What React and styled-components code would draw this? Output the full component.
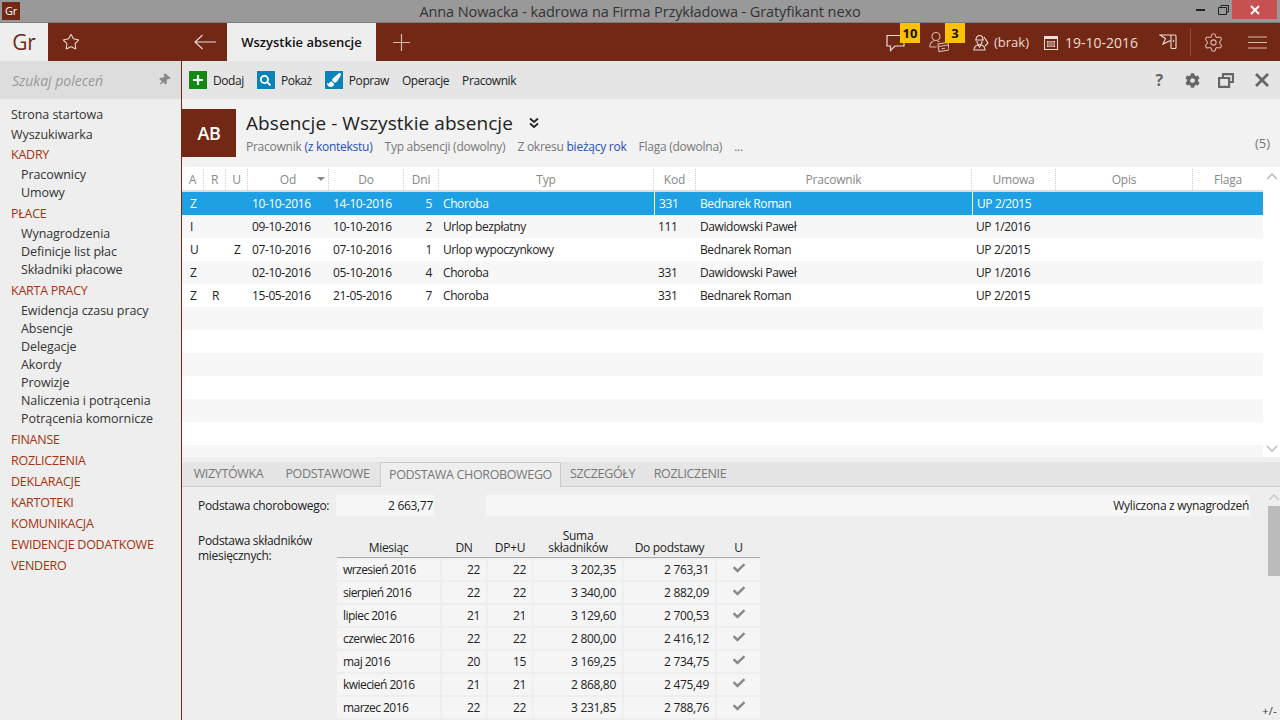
import React from 'react'
import styled, { createGlobalStyle } from 'styled-components'
import { Settings, Star } from 'lucide-react'
import { FaCheck, FaCog, FaPaintBrush, FaSearch, FaThumbtack } from 'react-icons/fa'

const FONT = '"Open Sans", "Noto Sans", "Liberation Sans", sans-serif'

const GlobalStyle = createGlobalStyle`
  html, body {
    margin: 0;
    padding: 0;
    background: #eee;
  }
  * {
    box-sizing: border-box;
  }
`

const Page = styled.div`
  width: 1280px;
  height: 720px;
  overflow: hidden;
  display: flex;
  flex-direction: column;
  font-family: ${FONT};
  font-size: 12px;
  letter-spacing: -0.3px;
  color: #222;
`

const TitleBar = styled.div`
  height: 23px;
  flex: none;
  display: flex;
  align-items: flex-start;
  background: #999;
  border-bottom: 1px solid #7d7d7d;
`

const AppIcon = styled.div`
  width: 18px;
  height: 18px;
  margin: 2px 0 0 2px;
  background: #722814;
  color: #fff;
  font-size: 11px;
  line-height: 18px;
  text-align: center;
`

const WindowTitle = styled.div`
  flex: 1;
  padding-left: 73px;
  text-align: center;
  font-size: 14.5px;
  line-height: 23px;
  letter-spacing: -0.1px;
  color: #333;
`

const WinButton = styled.div`
  width: ${p => p.$w}px;
  height: 19px;
  display: flex;
  align-items: center;
  justify-content: center;
  background: ${p => p.$bg || 'transparent'};
`

const AppBar = styled.div`
  height: 38px;
  flex: none;
  display: flex;
  background: #722814;
  color: #eadcd7;
`

const LogoCell = styled.div`
  width: 48px;
  background: #eee;
  color: #722814;
  font-size: 21px;
  font-weight: 400;
  line-height: 38px;
  text-align: center;
`

const BarCell = styled.div`
  position: relative;
  width: ${p => p.$w}px;
  flex: none;
  display: flex;
  align-items: center;
  justify-content: ${p => p.$start ? 'flex-start' : 'center'};
  gap: ${p => p.$gap || 0}px;
  margin-left: ${p => p.$ml || 0}px;
  font-size: ${p => p.$size || 13}px;
  letter-spacing: ${p => p.$spacing || 0}px;
`

const ActiveTab = styled.div`
  width: 149px;
  flex: none;
  background: #eee;
  color: #111;
  font-size: 13px;
  font-weight: 600;
  line-height: 38px;
  text-align: center;
  letter-spacing: 0;
`

const BarRight = styled.div`
  margin-left: auto;
  display: flex;
`

const Badge = styled.div`
  position: absolute;
  top: 0;
  left: ${p => p.$left}px;
  width: 20px;
  height: 20px;
  background: #ffc000;
  color: #111;
  font-size: 13px;
  font-weight: 700;
  line-height: 20px;
  text-align: center;
`

const BarSeparator = styled.div`
  width: 1px;
  height: 28px;
  margin-top: 5px;
  background: #8f4b38;
`

const Body = styled.div`
  flex: 1;
  min-height: 0;
  display: flex;
`

const Sidebar = styled.aside`
  width: 182px;
  flex: none;
  background: #eee;
  border-right: 1px solid #722814;
`

const SearchBox = styled.div`
  height: 38px;
  display: flex;
  align-items: center;
  justify-content: space-between;
  padding: 0 11px 0 12px;
  background: #ddd;
  color: #999;
  font-size: 14px;
  font-style: italic;
  letter-spacing: 0;
`

const PinIcon = styled(FaThumbtack)`
  transform: rotate(40deg);
  color: #888;
`

const Menu = styled.nav`
  padding-top: 3.5px;
`

const MenuItem = styled.div`
  height: ${p => p.$section ? 21 : 20.5}px;
  padding-left: 11px;
  color: ${p => p.$section ? '#a8320e' : '#333'};
  font-size: 12.5px;
  line-height: ${p => p.$section ? 21 : 23}px;
  letter-spacing: ${p => p.$section ? -0.25 : -0.05}px;
  white-space: nowrap;
`

const SubMenu = styled.div`
  padding: 1px 0;
`

const SubItem = styled.div`
  height: 18px;
  padding-left: 21px;
  color: #333;
  font-size: 12.5px;
  line-height: 18px;
  letter-spacing: -0.08px;
  white-space: nowrap;
`

const Main = styled.main`
  flex: 1;
  min-width: 0;
  display: flex;
  flex-direction: column;
`

const Toolbar = styled.div`
  height: 38px;
  flex: none;
  display: flex;
  align-items: center;
  gap: 13px;
  padding: 0 1px 0 7px;
  background: #e5e5e5;
  letter-spacing: -0.42px;
`

const ToolButton = styled.div`
  display: flex;
  align-items: center;
  gap: 6px;
  color: #222;
`

const ToolIcon = styled.span`
  width: 18px;
  height: 18px;
  display: flex;
  align-items: center;
  justify-content: center;
  background: ${p => p.$bg};
  color: #fff;
`

const ToolbarRight = styled.div`
  margin-left: auto;
  display: flex;
  align-items: center;
  color: #666;
`

const ToolbarGlyph = styled.div`
  width: ${p => p.$w}px;
  display: flex;
  justify-content: center;
  font-size: 16px;
  font-weight: 700;
`

const Header = styled.header`
  height: 68px;
  flex: none;
  display: flex;
  padding-top: 10px;
  background: #f2f2f2;
`

const Initials = styled.div`
  width: 54px;
  height: 48px;
  flex: none;
  background: #722814;
  color: #fff;
  font-size: 18px;
  font-weight: 600;
  line-height: 48px;
  text-align: center;
`

const HeaderText = styled.div`
  flex: 1;
  padding-left: 10px;
`

const Heading = styled.h1`
  margin: 0;
  display: flex;
  align-items: center;
  gap: 15px;
  height: 28px;
  color: #222;
  font-size: 19px;
  font-weight: 400;
  letter-spacing: 0.07px;
`

const FilterRow = styled.div`
  display: flex;
  gap: 12px;
  margin-top: 1px;
  color: #777;
  line-height: 18px;
  letter-spacing: -0.25px;
`

const FilterLink = styled.span`
  color: #2450b8;
`

const Count = styled.div`
  margin-left: auto;
  padding-right: 10px;
  font-size: 13px;
  margin-top: -4px;
  letter-spacing: 0;
`

const GridArea = styled.section`
  height: 290px;
  flex: none;
  display: flex;
  overflow: hidden;
  background: #fff;
`

const Grid = styled.div`
  width: 1081px;
  flex: none;
`

const columns = '22px 22px 22px 81px 75px 35px 215px 42px 276px 84px 137px 70px'

const GridHead = styled.div`
  height: 25px;
  display: grid;
  grid-template-columns: ${columns};
  padding-top: 2px;
  border-bottom: 2px solid #ddd;
`

const HeadCell = styled.div`
  position: relative;
  color: #888;
  line-height: 21px;
  text-align: center;
  letter-spacing: -0.2px;
  border-right: 1px dotted #ccc;
  &:last-child {
    border-right: none;
  }
`

const SortMark = styled.span`
  position: absolute;
  right: 3px;
  top: 8px;
  border-left: 4px solid transparent;
  border-right: 4px solid transparent;
  border-top: 4px solid #888;
`

const GridRow = styled.div`
  height: 23px;
  display: grid;
  grid-template-columns: ${columns};
  background: ${p => p.$selected ? '#1ea0e2' : p.$odd ? '#f7f7f7' : '#fff'};
  color: ${p => p.$selected ? '#fff' : '#222'};
  line-height: 23px;
  letter-spacing: -0.4px;
`

const Cell = styled.div`
  padding: 0 ${p => p.$right ? '7px' : '0'} 0 ${p => p.$pad ?? 4}px;
  text-align: ${p => p.$right ? 'right' : 'left'};
  white-space: nowrap;
  overflow: hidden;
  border-left: ${p => p.$divide && p.$selected ? '1px solid #fff' : 'none'};
`

const Rail = styled.div`
  flex: 1;
  display: flex;
  flex-direction: column;
  justify-content: space-between;
  align-items: center;
  padding: 6px 0 5px;
`

const TabStrip = styled.div`
  height: 30px;
  flex: none;
  display: flex;
  align-items: flex-end;
  background: linear-gradient(#efefef 5px, #e5e5e5 5px);
  border-bottom: 1px solid #ccc;
`

const Tab = styled.div`
  width: ${p => p.$w}px;
  height: ${p => p.$active ? 25 : 24}px;
  margin-bottom: ${p => p.$active ? -1 : 0}px;
  background: ${p => p.$active ? '#eee' : 'transparent'};
  border: ${p => p.$active ? '1px solid #ccc' : 'none'};
  border-bottom: none;
  color: #777;
  font-size: 12.5px;
  line-height: 23px;
  text-align: center;
  letter-spacing: -0.35px;
  white-space: nowrap;
`

const Details = styled.section`
  position: relative;
  flex: 1;
  min-height: 0;
  display: flex;
  background: #eee;
  overflow: hidden;
`

const DetailsBody = styled.div`
  width: 1086px;
  flex: none;
  padding: 8px 0 0 16px;
`

const FormRow = styled.div`
  display: flex;
  align-items: flex-start;
`

const FormLabel = styled.div`
  width: ${p => p.$w}px;
  flex: none;
  padding-top: ${p => p.$top || 0}px;
  line-height: ${p => p.$line || 21}px;
  letter-spacing: -0.3px;
`

const ValueBox = styled.div`
  width: ${p => p.$w}px;
  height: 21px;
  flex: none;
  margin-left: ${p => p.$ml || 0}px;
  padding-right: 1px;
  background: #f7f7f7;
  line-height: 21px;
  text-align: right;
`

const MonthTable = styled.div`
  width: 423px;
  flex: none;
  margin-top: 14px;
  margin-left: 1px;
`

const monthColumns = '103px 44px 44px 88px 91px 43px'

const MonthHead = styled.div`
  display: grid;
  grid-template-columns: ${monthColumns};
  gap: 2px;
  align-items: end;
  padding-bottom: 3px;
  border-bottom: 1px solid #aaa;
  margin-bottom: 1px;
  line-height: 12px;
  text-align: center;
`

const MonthHeadWrap = styled.div`
  padding: 0 8px;
`

const MonthRow = styled.div`
  display: grid;
  grid-template-columns: ${monthColumns};
  gap: 2px;
  margin-bottom: 2px;
`

const MonthCell = styled.div`
  height: 21px;
  padding: 0 6px;
  background: #f5f5f5;
  line-height: 21px;
  text-align: ${p => p.$align || 'right'};
  color: ${p => p.$muted ? '#888' : '#222'};
  letter-spacing: ${p => p.$align === 'left' ? '-0.55px' : '-0.3px'};
`

const DetailsRail = styled.div`
  position: relative;
  flex: 1;
`

const RailThumb = styled.div`
  position: absolute;
  top: 19px;
  right: 0;
  width: 12px;
  height: 70px;
  background: #bbb;
`

const RailArrow = styled.div`
  position: absolute;
  top: 7px;
  right: 0;
  width: 12px;
  display: flex;
  justify-content: center;
`

const PlusMinus = styled.div`
  position: absolute;
  right: 3px;
  bottom: 2px;
  font-size: 11px;
  letter-spacing: 0.3px;
  color: #333;
`

const Chevron = ({ up, color = '#bbb' }) => (
  <svg width="12" height="7" viewBox="0 0 12 7" fill="none" stroke={color} strokeWidth="1.5">
    <path d={up ? 'M1 6l5-5 5 5' : 'M1 1l5 5 5-5'} />
  </svg>
)

const BubbleIcon = () => (
  <svg width="19" height="19" viewBox="0 0 19 19" fill="none" stroke="#eadcd7" strokeWidth="1.2">
    <path d="M1 2.500h17v10.500H9l-4.500 4.500V13H1z" />
  </svg>
)

const UserCardIcon = () => (
  <svg width="20" height="22" viewBox="0 0 20 22" fill="none" stroke="#d9b9ae" strokeWidth="1.1">
    <circle cx="7" cy="5.500" r="4" />
    <path d="M.7 16c0-3.500 2.300-6 4.500-6.300M8.500 10.500l2 .5M.7 16h7" />
    <path d="M9 13l10-1.500 1 7.500-10 1.500zM9.300 15.500l10-1.500M12.500 17.800l3.500-.5" />
  </svg>
)

const WorkerIcon = () => (
  <svg width="16" height="17" viewBox="0 0 16 17" fill="none" stroke="#eadcd7" strokeWidth="1.100">
    <path d="M3 6c0-6 7-6 7 0zM2 6h9M4 7c0 5 5 5 5 0" />
    <path d="M1 16c0-3 2-5 4-5l1.500 2 1.500-2c2 0 4 2 4 5zM11 3l4 6-3 3" />
  </svg>
)

const CalendarIcon = () => (
  <svg width="14" height="15" viewBox="0 0 14 15">
    <path fill="#eadcd7" d="M0 1h14v14H0z" />
    <path fill="#722814" d="M1 4h12v10H1z" />
    <path fill="#eadcd7" d="M3 6h8v6H3z" />
    <path stroke="#722814" strokeWidth="0.7" d="M5 6v6M7 6v6M9 6v6M3 8h8M3 10h8" />
  </svg>
)

const ExitIcon = () => (
  <svg width="18" height="16" viewBox="0 0 18 16" fill="none" stroke="#eadcd7" strokeWidth="1.100">
    <path d="M12.500 1h3.500a1 1 0 0 1 1 1v11.500a1 1 0 0 1-1 1h-3a1 1 0 0 1-1-1V2a1 1 0 0 1 .5-1zM12.500 1H1l5.500 3.500-2.500 5.500 7.500-3.500" />
    <path d="M14.500 6v2" />
  </svg>
)

const BurgerIcon = () => (
  <svg width="19" height="13" viewBox="0 0 19 13" stroke="#d9b9ae" strokeWidth="1.200">
    <path d="M0 1h19M0 6.500h19M0 12h19" />
  </svg>
)

const ThinArrow = () => (
  <svg width="22" height="16" viewBox="0 0 22 16" fill="none" stroke="#eadcd7" strokeWidth="1.100">
    <path d="M22 8H1M8.500 1L1 8l7.500 7" />
  </svg>
)

const ThinPlus = () => (
  <svg width="17" height="17" viewBox="0 0 17 17" stroke="#d9b9ae" strokeWidth="1.200">
    <path d="M8.500 0v17M0 8.500h17" />
  </svg>
)

const PlusIcon = () => (
  <svg width="12" height="12" viewBox="0 0 12 12" stroke="#fff" strokeWidth="2.200">
    <path d="M6 1v10M1 6h10" />
  </svg>
)

const DoubleChevron = () => (
  <svg width="12" height="12" viewBox="0 0 12 12" fill="none" stroke="#222" strokeWidth="1.800">
    <path d="M2 1.500l4 3.500 4-3.500M2 6.500l4 3.500 4-3.500" />
  </svg>
)

const RestoreGlyph = () => (
  <svg width="16" height="15" viewBox="0 0 16 15" fill="none" stroke="#666" strokeWidth="2.200">
    <path d="M5 4V1.100h10V9h-3M1.100 5h10v8.900H1.100z" />
  </svg>
)

const CloseGlyph = () => (
  <svg width="14" height="14" viewBox="0 0 14 14" stroke="#666" strokeWidth="2.800">
    <path d="M1 1l12 12M13 1L1 13" />
  </svg>
)

const menu = [
  { label: 'Strona startowa' },
  { label: 'Wyszukiwarka' },
  { label: 'KADRY', section: true, items: ['Pracownicy', 'Umowy'] },
  { label: 'PŁACE', section: true, items: ['Wynagrodzenia', 'Definicje list płac', 'Składniki płacowe'] },
  {
    label: 'KARTA PRACY',
    section: true,
    items: ['Ewidencja czasu pracy', 'Absencje', 'Delegacje', 'Akordy', 'Prowizje', 'Naliczenia i potrącenia', 'Potrącenia komornicze'],
  },
  { label: 'FINANSE', section: true },
  { label: 'ROZLICZENIA', section: true },
  { label: 'DEKLARACJE', section: true },
  { label: 'KARTOTEKI', section: true },
  { label: 'KOMUNIKACJA', section: true },
  { label: 'EWIDENCJE DODATKOWE', section: true },
  { label: 'VENDERO', section: true },
]

const heads = ['A', 'R', 'U', 'Od', 'Do', 'Dni', 'Typ', 'Kod', 'Pracownik', 'Umowa', 'Opis', 'Flaga']

const absences = [
  ['Z', '', '', '10-10-2016', '14-10-2016', '5', 'Choroba', '331', 'Bednarek Roman', 'UP 2/2015'],
  ['I', '', '', '09-10-2016', '10-10-2016', '2', 'Urlop bezpłatny', '111', 'Dawidowski Paweł', 'UP 1/2016'],
  ['U', '', 'Z', '07-10-2016', '07-10-2016', '1', 'Urlop wypoczynkowy', '', 'Bednarek Roman', 'UP 2/2015'],
  ['Z', '', '', '02-10-2016', '05-10-2016', '4', 'Choroba', '331', 'Dawidowski Paweł', 'UP 1/2016'],
  ['Z', 'R', '', '15-05-2016', '21-05-2016', '7', 'Choroba', '331', 'Bednarek Roman', 'UP 2/2015'],
  [], [], [], [], [], [], [],
]

const months = [
  ['wrzesień 2016', '22', '22', '3 202,35', '2 763,31'],
  ['sierpień 2016', '22', '22', '3 340,00', '2 882,09'],
  ['lipiec 2016', '21', '21', '3 129,60', '2 700,53'],
  ['czerwiec 2016', '22', '22', '2 800,00', '2 416,12'],
  ['maj 2016', '20', '15', '3 169,25', '2 734,75'],
  ['kwiecień 2016', '21', '21', '2 868,80', '2 475,49'],
  ['marzec 2016', '22', '22', '3 231,85', '2 788,76'],
]

const tabs = [
  ['WIZYTÓWKA', 93],
  ['PODSTAWOWE', 105],
  ['PODSTAWA CHOROBOWEGO', 181],
  ['SZCZEGÓŁY', 83],
  ['ROZLICZENIE', 92],
]

function AbsenceRow({ row, index }) {
  const selected = index === 0
  return (
    <GridRow $selected={selected} $odd={index % 2 === 1}>
      {Array.from({ length: 12 }).map((_, i) => (
        <Cell
          key={i}
          $selected={selected}
          $divide={i === 7 || i === 9}
          $right={i === 5}
          $pad={i < 3 ? 8 : 4}
        >
          {row[i]}
        </Cell>
      ))}
    </GridRow>
  )
}

export default function App() {
  return (
    <Page>
      <GlobalStyle />
      <TitleBar>
        <AppIcon>Gr</AppIcon>
        <WindowTitle>Anna Nowacka - kadrowa na Firma Przykładowa - Gratyfikant nexo</WindowTitle>
        <WinButton $w={27}>
          <svg width="9" height="2"><path d="M0 1h9" stroke="#222" strokeWidth="2" /></svg>
        </WinButton>
        <WinButton $w={18}>
          <svg width="11" height="10" viewBox="0 0 11 10" fill="none" stroke="#222">
            <path d="M3 2V.5h7.500V7H8.500M.5 2.500h8v7h-8z" />
          </svg>
        </WinButton>
        <WinButton $w={45} $bg="#c75050">
          <svg width="10" height="10" stroke="#fff" strokeWidth="2"><path d="M1 1l8 8M9 1L1 9" /></svg>
        </WinButton>
        <WinButton $w={3} />
      </TitleBar>

      <AppBar>
        <LogoCell>Gr</LogoCell>
        <BarCell $w={46}><Star size={18} strokeWidth={1.4} /></BarCell>
        <BarCell $w={45} $ml={88}><ThinArrow /></BarCell>
        <ActiveTab>Wszystkie absencje</ActiveTab>
        <BarCell $w={50}><ThinPlus /></BarCell>
        <BarRight>
          <BarCell $w={43} $start>
            <BubbleIcon />
            <Badge $left={14}>10</Badge>
          </BarCell>
          <BarCell $w={44} $start>
            <UserCardIcon />
            <Badge $left={16}>3</Badge>
          </BarCell>
          <BarCell $w={71} $start $gap={5}>
            <WorkerIcon />
            (brak)
          </BarCell>
          <BarCell $w={115} $start $gap={7} $size={14}>
            <CalendarIcon />
            19-10-2016
          </BarCell>
          <BarCell $w={31} $start><ExitIcon /></BarCell>
          <BarSeparator />
          <BarCell $w={44}><Settings size={21} strokeWidth={1.2} color="#d9b9ae" /></BarCell>
          <BarCell $w={45}><BurgerIcon /></BarCell>
        </BarRight>
      </AppBar>

      <Body>
        <Sidebar>
          <SearchBox>
            Szukaj poleceń
            <PinIcon size={12} />
          </SearchBox>
          <Menu>
            {menu.map(entry => (
              <React.Fragment key={entry.label}>
                <MenuItem $section={entry.section}>{entry.label}</MenuItem>
                {entry.items && (
                  <SubMenu>
                    {entry.items.map(item => <SubItem key={item}>{item}</SubItem>)}
                  </SubMenu>
                )}
              </React.Fragment>
            ))}
          </Menu>
        </Sidebar>

        <Main>
          <Toolbar>
            <ToolButton><ToolIcon $bg="#128a12"><PlusIcon /></ToolIcon>Dodaj</ToolButton>
            <ToolButton><ToolIcon $bg="#0a84b8"><FaSearch size={11} /></ToolIcon>Pokaż</ToolButton>
            <ToolButton><ToolIcon $bg="#0a84b8"><FaPaintBrush size={14} /></ToolIcon>Popraw</ToolButton>
            <ToolButton>Operacje</ToolButton>
            <ToolButton>Pracownik</ToolButton>
            <ToolbarRight>
              <ToolbarGlyph $w={36}>?</ToolbarGlyph>
              <ToolbarGlyph $w={30}><FaCog size={15} /></ToolbarGlyph>
              <ToolbarGlyph $w={38}><RestoreGlyph /></ToolbarGlyph>
              <ToolbarGlyph $w={34}><CloseGlyph /></ToolbarGlyph>
            </ToolbarRight>
          </Toolbar>

          <Header>
            <Initials>AB</Initials>
            <HeaderText>
              <Heading>Absencje - Wszystkie absencje <DoubleChevron /></Heading>
              <FilterRow>
                <span>Pracownik <FilterLink>(z kontekstu)</FilterLink></span>
                <span>Typ absencji (dowolny)</span>
                <span>Z okresu <FilterLink>bieżący rok</FilterLink></span>
                <span>Flaga (dowolna)</span>
                <span>...</span>
                <Count>(5)</Count>
              </FilterRow>
            </HeaderText>
          </Header>

          <GridArea>
            <Grid>
              <GridHead>
                {heads.map(h => (
                  <HeadCell key={h}>
                    {h}
                    {h === 'Od' && <SortMark />}
                  </HeadCell>
                ))}
              </GridHead>
              {absences.map((row, i) => <AbsenceRow key={i} row={row} index={i} />)}
            </Grid>
            <Rail>
              <Chevron up />
              <Chevron />
            </Rail>
          </GridArea>

          <TabStrip>
            {tabs.map(([t, w]) => <Tab key={t} $w={w} $active={t === 'PODSTAWA CHOROBOWEGO'}>{t}</Tab>)}
          </TabStrip>

          <Details>
            <DetailsBody>
              <FormRow>
                <FormLabel $w={138}>Podstawa chorobowego:</FormLabel>
                <ValueBox $w={98}>2 663,77</ValueBox>
                <ValueBox $w={764} $ml={52}>Wyliczona z wynagrodzeń</ValueBox>
              </FormRow>
              <FormRow>
                <FormLabel $w={138} $top={17} $line={15}>Podstawa składników miesięcznych:</FormLabel>
                <MonthTable>
                  <MonthHead>
                    <div>Miesiąc</div>
                    <div>DN</div>
                    <div>DP+U</div>
                    <MonthHeadWrap>Suma składników</MonthHeadWrap>
                    <div>Do podstawy</div>
                    <div>U</div>
                  </MonthHead>
                  {months.map(m => (
                    <MonthRow key={m[0]}>
                      <MonthCell $align="left">{m[0]}</MonthCell>
                      <MonthCell>{m[1]}</MonthCell>
                      <MonthCell>{m[2]}</MonthCell>
                      <MonthCell>{m[3]}</MonthCell>
                      <MonthCell>{m[4]}</MonthCell>
                      <MonthCell $align="center" $muted><FaCheck size={12} /></MonthCell>
                    </MonthRow>
                  ))}
                </MonthTable>
              </FormRow>
            </DetailsBody>
            <DetailsRail>
              <RailArrow><Chevron up color="#ccc" /></RailArrow>
              <RailThumb />
            </DetailsRail>
            <PlusMinus>+/-</PlusMinus>
          </Details>
        </Main>
      </Body>
    </Page>
  )
}
